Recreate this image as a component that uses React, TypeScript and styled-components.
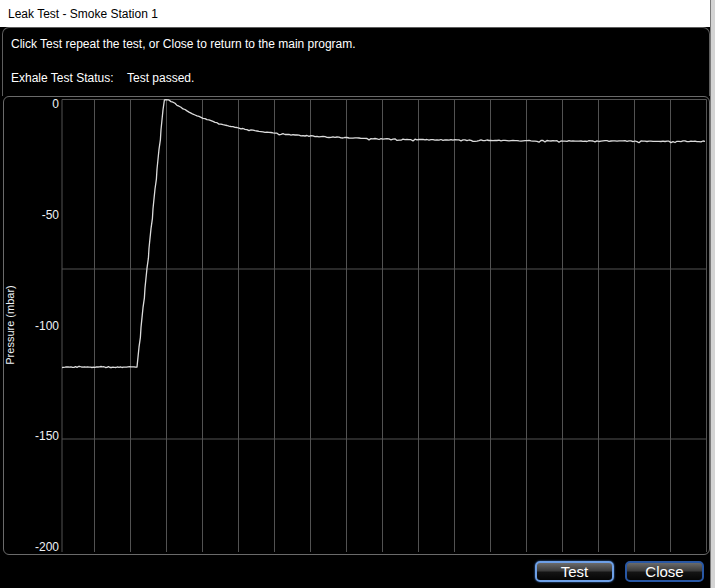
import styled, { createGlobalStyle } from 'styled-components';

const GlobalStyle = createGlobalStyle`
	html, body {
		margin: 0;
		padding: 0;
		background: #d4d4d4;
	}
	body {
		font-family: "Liberation Sans", Arial, sans-serif;
	}
`;

const FONT = '"Liberation Sans", Arial, sans-serif';

// plot frame, in page coordinates (the svg viewBox is offset to match)
const PLOT = { left: 62, right: 706.5, top: 100.5, bottom: 553 };
const V_GRID = Array.from({ length: 17 }, (_, k) => 94.5 + 36 * k);
const H_GRID = [270, 440];
const Y_TICKS = [
	{ label: '0', y: 105 },
	{ label: '-50', y: 216 },
	{ label: '-100', y: 326.5 },
	{ label: '-150', y: 437 },
	{ label: '-200', y: 547.5 },
];

const noise = (i: number) => {
	const s = Math.sin(i * 12.9898 + 78.233) * 43758.5453;
	return s - Math.floor(s) - 0.5;
};

const buildTrace = () => {
	const pts: [number, number][] = [];
	for (let x = 62; x < 137; x += 1.5) pts.push([x, 368 + noise(x) * 1.1]);
	for (let x = 137; x <= 164; x += 1) {
		const kink = x % 4 === 0 ? 1.2 : 0;
		pts.push([x + kink * 0.3, 368 - (x - 137) * (267 / 27)]);
	}
	pts.push([166, 100.6], [168.5, 100.8], [171, 102.6]);
	for (let x = 173; x <= 706; x += 2) {
		const d = x - 170;
		const base = 142.6 - 30 * Math.exp(-d / 45) - 11.5 * Math.exp(-d / 140);
		const spike = noise(x * 3.1) > 0.42 ? 1.1 : 0;
		pts.push([x, base + noise(x) * 0.9 + spike]);
	}
	return pts.map(([x, y]) => `${x.toFixed(1)},${y.toFixed(1)}`).join(' ');
};

const TRACE = buildTrace();

const Window = styled.div`
	width: 710px;
	height: 588px;
	border-right: 1px solid #7a7a7a;
	background: #000;
	display: flex;
	flex-direction: column;
	overflow: hidden;
`;

const TitleBar = styled.div`
	height: 27px;
	flex: none;
	background: #fff;
	color: #000;
	display: flex;
	align-items: center;
	padding-left: 8px;
	font-size: 12px;
`;

const InfoPanel = styled.div`
	height: 69px;
	flex: none;
	box-sizing: border-box;
	margin: 0 0 0 2px;
	border: 1px solid #5e5e5e;
	border-bottom: none;
	border-radius: 7px 7px 0 0;
	padding: 9px 8px 0;
	display: flex;
	flex-direction: column;
	gap: 19px;
	color: #fff;
	font-size: 12px;
	line-height: 15px;
`;

const StatusRow = styled.div`
	display: grid;
	grid-template-columns: 116px auto;
`;

const ChartPanel = styled.div`
	height: 459px;
	flex: none;
	box-sizing: border-box;
	margin: 0 0 0 3px;
	border: 1px solid #6a6a6a;
	border-radius: 6px;
	overflow: hidden;
`;

const ChartSvg = styled.svg`
	display: block;
	width: 705px;
	height: 457px;
`;

const ButtonRow = styled.div`
	display: flex;
	justify-content: flex-end;
	gap: 11px;
	padding: 6px 6px 0 0;
`;

const DialogButton = styled.button<{ $default?: boolean }>`
	width: 79px;
	height: 21px;
	box-sizing: border-box;
	padding: 0;
	border: 2px solid ${({ $default }) => ($default ? '#6d9fe6' : '#2857a4')};
	border-radius: 5px;
	background: linear-gradient(to bottom, #6b6b6b 0%, #3c3c3c 45%, #141414 55%, #050505 100%);
	color: #fff;
	font-family: ${FONT};
	font-size: 15px;
	line-height: 17px;
	box-shadow: ${({ $default }) => ($default ? '0 0 2px #4a86d8' : 'none')};
`;

const Chart = () => (
	<ChartSvg viewBox="4 98 705 457">
		<g stroke="#525252" strokeWidth={1}>
			<line x1={PLOT.left} y1={PLOT.top} x2={PLOT.right} y2={PLOT.top} />
			<line x1={PLOT.left} y1={PLOT.top} x2={PLOT.left} y2={PLOT.bottom} />
			<line x1={PLOT.right} y1={PLOT.top} x2={PLOT.right} y2={PLOT.bottom} />
			{V_GRID.map((x) => (
				<line key={x} x1={x} y1={PLOT.top} x2={x} y2={PLOT.bottom} />
			))}
			{H_GRID.map((y) => (
				<line key={y} x1={PLOT.left} y1={y} x2={PLOT.right} y2={y} />
			))}
		</g>
		<g fill="#eef2f6" fontFamily={FONT} fontSize={12}>
			{Y_TICKS.map((t) => (
				<text key={t.label} x={59} y={t.y} textAnchor="end" dominantBaseline="central">
					{t.label}
				</text>
			))}
			<text
				x={9.5}
				y={326}
				fontSize={11}
				textAnchor="middle"
				dominantBaseline="central"
				transform="rotate(-90 9.5 326)"
			>
				Pressure (mbar)
			</text>
		</g>
		<polyline points={TRACE} fill="none" stroke="#dcdcdc" strokeWidth={1.3} strokeLinejoin="round" />
	</ChartSvg>
);

const App = () => {
	return (
		<>
			<GlobalStyle />
			<Window>
				<TitleBar>Leak Test - Smoke Station 1</TitleBar>
				<InfoPanel>
					<div>Click Test repeat the test, or Close to return to the main program.</div>
					<StatusRow>
						<span>Exhale Test Status:</span>
						<span>Test passed.</span>
					</StatusRow>
				</InfoPanel>
				<ChartPanel>
					<Chart />
				</ChartPanel>
				<ButtonRow>
					<DialogButton $default>Test</DialogButton>
					<DialogButton>Close</DialogButton>
				</ButtonRow>
			</Window>
		</>
	);
};

export default App;
